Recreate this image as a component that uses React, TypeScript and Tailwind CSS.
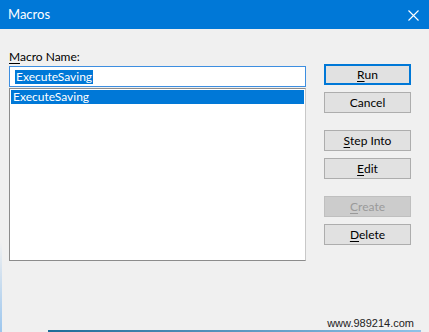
const font = { fontFamily: 'Lato, "Noto Sans", sans-serif' };

function DlgButton({
  label,
  hot,
  isDefault = false,
  disabled = false,
}: {
  label: string;
  hot?: number;
  isDefault?: boolean;
  disabled?: boolean;
}) {
  return (
    <button
      type="button"
      disabled={disabled}
      className={`flex h-[21px] w-[87px] items-center justify-center text-[12px] leading-none ${
        isDefault
          ? "border-2 border-[#0078d7] bg-[#e1e1e1] text-black"
          : disabled
            ? "border border-[#bfbfbf] bg-[#cccccc] text-[#9a9a9a]"
            : "border border-[#adadad] bg-[#e1e1e1] text-black"
      }`}
    >
      {hot === undefined ? (
        label
      ) : (
        <>
          {label.slice(0, hot)}
          <span className="underline underline-offset-2">{label.charAt(hot)}</span>
          {label.slice(hot + 1)}
        </>
      )}
    </button>
  );
}

export default function App() {
  return (
    <div
      className="relative h-[332px] w-[429px] overflow-hidden bg-[#f0f0f0]"
      style={font}
    >
      {/* title bar */}
      <div className="flex h-[29px] items-center justify-between bg-[#0078d7] pl-[8px] pr-[10px] text-white">
        <span className="text-[13px] leading-none">Macros</span>
        <svg width="11" height="11" viewBox="0 0 11 11" className="mt-[1px]">
          <path d="M0.5 0.5 L10.5 10.5 M10.5 0.5 L0.5 10.5" stroke="white" strokeWidth="1.1" />
        </svg>
      </div>

      <div className="flex pl-[9px] pt-[20px]">
        {/* left column */}
        <div className="flex w-[297px] flex-col">
          <div className="h-[17px] text-[12px] leading-[16px] text-black">
            <span className="underline underline-offset-2">M</span>acro Name:
          </div>
          <div className="flex h-[21px] items-center border border-[#3d8ee0] bg-white px-[5px]">
            <span className="bg-[#0078d7] px-[1px] text-[12px] leading-[14px] text-white">
              ExecuteSaving
            </span>
          </div>
          <div className="mt-[1px] h-[173px] border border-[#8c8c8c] border-r-[#c8c8c8] bg-white p-[1px]">
            <div className="flex h-[14px] items-center bg-[#0078d7] pl-[2px] text-[12px] leading-none text-white">
              ExecuteSaving
            </div>
          </div>
        </div>

        {/* right column */}
        <div className="ml-[18px] flex flex-col pt-[15px]">
          <div className="flex flex-col gap-[7px]">
            <DlgButton label="Run" hot={0} isDefault />
            <DlgButton label="Cancel" />
          </div>
          <div className="mt-[17px] flex flex-col gap-[7px]">
            <DlgButton label="Step Into" hot={0} />
            <DlgButton label="Edit" hot={0} />
          </div>
          <div className="mt-[17px] flex flex-col gap-[7px]">
            <DlgButton label="Create" hot={0} disabled />
            <DlgButton label="Delete" hot={0} />
          </div>
        </div>
      </div>

      {/* window edge + watermark */}
      <div className="absolute bottom-0 left-0 h-[90px] w-[2px] bg-gradient-to-b from-transparent to-[#9cc6ee]" />
      <div
        className="absolute bottom-[3px] right-[15px] text-[11px] leading-none text-[#222]"
        style={{ fontFamily: '"Liberation Sans", Arial, sans-serif' }}
      >
        www.989214.com
      </div>
      <div className="absolute bottom-0 left-[48px] right-[8px] h-[2px] bg-gradient-to-r from-[#1d6c98] to-[#8fc2e8]" />
    </div>
  );
}
